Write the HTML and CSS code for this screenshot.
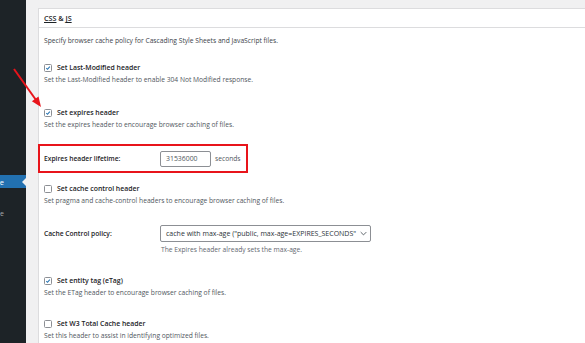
FILE: index.html
```html
<!DOCTYPE html>
<html lang="en">
<head>
<meta charset="utf-8">
<title>Browser Cache - CSS &amp; JS</title>
<link rel="stylesheet" href="styles.css">
</head>
<body>
<div class="page">
  <nav class="sidebar">
    <div class="menu-item active"><span class="menu-text">Performance</span></div>
    <div class="menu-item sub"><span class="menu-text">Page Cache</span></div>
  </nav>
  <main class="main">
    <section class="card">
      <header class="card-head"><h3 class="card-title"><span class="abbr">CSS</span> &amp; <span class="abbr">JS</span></h3></header>
      <div class="card-body">
        <p class="intro">Specify browser cache policy for Cascading Style Sheets and JavaScript files.</p>

        <div class="option opt-1">
          <label class="check-label"><span class="checkbox checked"><svg viewBox="0 0 10 10"><path d="M2.2 5.2 L4.2 7.2 L8 2.6" /></svg></span>Set Last-Modified header</label>
          <p class="desc">Set the Last-Modified header to enable 304 Not Modified response.</p>
        </div>

        <div class="option opt-2">
          <label class="check-label"><span class="checkbox checked"><svg viewBox="0 0 10 10"><path d="M2.2 5.2 L4.2 7.2 L8 2.6" /></svg></span>Set expires header</label>
          <p class="desc">Set the expires header to encourage browser caching of files.</p>
        </div>

        <div class="highlight">
          <div class="field-row">
            <span class="field-label">Expires header lifetime:</span>
            <span class="field-control"><input class="text-input" type="text" value="31536000"><span class="unit">seconds</span></span>
          </div>
        </div>

        <div class="option opt-3">
          <label class="check-label"><span class="checkbox"></span>Set cache control header</label>
          <p class="desc">Set pragma and cache-control headers to encourage browser caching of files.</p>
        </div>

        <div class="field-row select-row">
          <span class="field-label">Cache Control policy:</span>
          <div class="select"><span class="select-text">cache with max-age ("public, max-age=EXPIRES_SECONDS"</span><svg class="chevron" viewBox="0 0 10 6"><path d="M1 1 L5 5 L9 1"/></svg></div>
        </div>
        <p class="note">The Expires header already sets the max-age.</p>

        <div class="option opt-4">
          <label class="check-label"><span class="checkbox checked"><svg viewBox="0 0 10 10"><path d="M2.2 5.2 L4.2 7.2 L8 2.6" /></svg></span>Set entity tag (eTag)</label>
          <p class="desc">Set the ETag header to encourage browser caching of files.</p>
        </div>

        <div class="option opt-5">
          <label class="check-label"><span class="checkbox"></span>Set W3 Total Cache header</label>
          <p class="desc">Set this header to assist in identifying optimized files.</p>
        </div>
      </div>
    </section>
  </main>
  <svg class="arrow" viewBox="0 0 60 120" width="60" height="120">
    <line x1="14" y1="69" x2="36" y2="100" />
    <polygon points="41,107 31.9,101.2 38.5,96.5" />
  </svg>
</div>
</body>
</html>
```

FILE: styles.css
```css
* { box-sizing: border-box; }

html, body {
  margin: 0;
  padding: 0;
}

body {
  background: #f0f0f1;
  font-family: "Open Sans", "Noto Sans", sans-serif;
  color: #3c434a;
  font-size: 6.7px;
  line-height: 12px;
}

.page {
  position: relative;
  display: flex;
  width: 585px;
  height: 343px;
  overflow: hidden;
}

/* Sidebar */
.sidebar {
  width: 26px;
  flex: none;
  background: #1d2327;
  padding-top: 175px;
}

.menu-item {
  position: relative;
  height: 13px;
  display: flex;
  justify-content: flex-end;
  align-items: center;
  overflow: hidden;
  padding-right: 22px;
  white-space: nowrap;
  font-size: 7.5px;
  color: #c3c4c7;
}

.menu-item .menu-text { flex: none; }

.menu-item.active {
  background: #2271b1;
  color: #fff;
}

.menu-item.active::after {
  content: "";
  position: absolute;
  right: 0;
  top: 50%;
  margin-top: -4px;
  border: 4px solid transparent;
  border-right-color: #f0f0f1;
  border-left-width: 0;
}

.menu-item.sub {
  margin-top: 19px;
  font-size: 7px;
  color: #a7aaad;
}

/* Main */
.main {
  flex: 1;
  padding: 8px 0 0 12px;
  min-width: 0;
}

.card {
  background: #fff;
  border: 1px solid #dcdcde;
  border-right: none;
  margin-right: -10px;
  height: 400px;
}

.card-head {
  height: 19px;
  border-bottom: 1px solid #dcdcde;
  padding-left: 5px;
  display: flex;
  align-items: center;
}

.card-title {
  margin: 0;
  font-size: 7.2px;
  font-weight: 600;
  color: #1d2327;
}

.abbr {
  text-decoration: underline;
  text-decoration-thickness: 1px;
  text-underline-offset: 1px;
}

.card-body {
  padding: 0 5px;
}

p { margin: 0; }

.intro { margin-top: 7px; }

.option { display: block; }
.opt-1 { margin-top: 15px; }
.opt-2 { margin-top: 21px; }
.opt-3 { margin-top: 10px; }
.opt-4 { margin-top: 19px; }
.opt-5 { margin-top: 19px; }

.check-label {
  display: flex;
  align-items: center;
  height: 12px;
  font-weight: 600;
  font-size: 6.9px;
  color: #1d2327;
}

.checkbox {
  width: 8px;
  height: 8px;
  border: 1px solid #8c8f94;
  border-radius: 1.5px;
  background: #fff;
  margin-right: 5px;
  flex: none;
  display: flex;
}

.checkbox svg {
  width: 100%;
  height: 100%;
  fill: none;
  stroke: #2271b1;
  stroke-width: 1.7;
}

.desc { color: #50575e; }

/* Red highlight */
.highlight {
  margin-top: 13px;
  margin-left: -6px;
  width: 210px;
  height: 29px;
  border: 2px solid #e8141b;
  padding-left: 4px;
  display: flex;
  align-items: center;
}

.field-row {
  display: grid;
  grid-template-columns: 116px auto;
  align-items: center;
}

.field-label {
  font-weight: 600;
  color: #1d2327;
}

.field-control {
  display: flex;
  align-items: center;
}

.text-input {
  width: 51px;
  height: 16px;
  border: 1px solid #8c8f94;
  border-radius: 2px;
  padding: 0 0 0 5px;
  font: inherit;
  font-size: 6.9px;
  color: #50575e;
  margin: 0;
}

.unit {
  margin-left: 4px;
  color: #50575e;
}

.select-row { margin-top: 18px; }

.select {
  width: 211px;
  height: 17px;
  border: 1px solid #8c8f94;
  border-radius: 2px;
  display: flex;
  align-items: center;
  padding-left: 5px;
  padding-right: 3px;
  font-size: 7px;
  color: #2c3338;
  white-space: nowrap;
  overflow: hidden;
}

.select-text { flex: 1; }

.chevron {
  width: 7px;
  height: 5px;
  flex: none;
  margin-left: 2px;
  fill: none;
  stroke: #50575e;
  stroke-width: 1.3;
}

.note {
  margin-top: 2px;
  margin-left: 117px;
  color: #646970;
}

/* Annotation arrow */
.arrow {
  position: absolute;
  left: 0;
  top: 0;
  pointer-events: none;
}

.arrow line {
  stroke: #e8141b;
  stroke-width: 2;
}

.arrow polygon { fill: #e8141b; }
```
